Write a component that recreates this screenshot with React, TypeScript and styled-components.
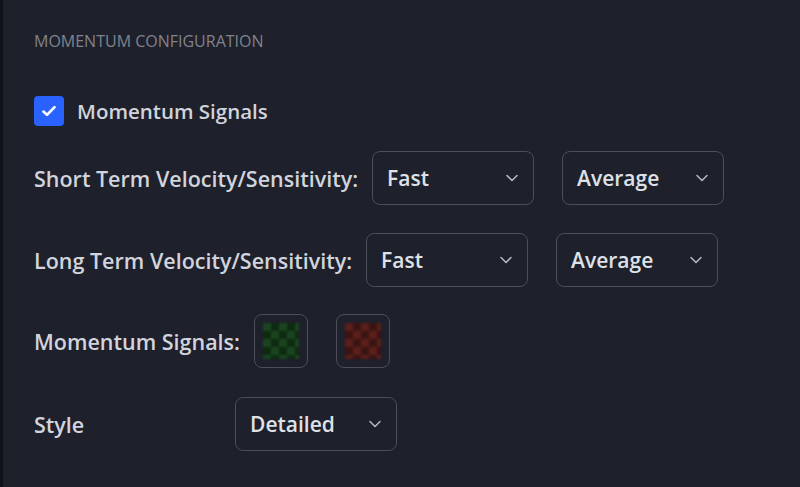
import * as React from 'react';
import styled, { createGlobalStyle } from 'styled-components';

const GlobalStyle = createGlobalStyle`
    html, body {
        margin: 0;
        padding: 0;
        background: #1e202b;
    }
    body {
        font-family: "Open Sans", "Noto Sans", sans-serif;
        color: #d1d4dc;
    }
`;

const Page = styled.div`
    display: flex;
    width: 800px;
    height: 487px;
    overflow: hidden;
`;

const Edge = styled.div`
    width: 3px;
    background: #10121a;
`;

const Panel = styled.div`
    flex: 1;
    padding: 30px 0 0 31px;
    display: flex;
    flex-direction: column;
`;

const Heading = styled.div`
    font-size: 16px;
    color: #80838d;
    text-transform: uppercase;
    height: 22px;
    line-height: 22px;
`;

const CheckRow = styled.label`
    display: flex;
    align-items: center;
    gap: 13px;
    margin-top: 44px;
    font-size: 20.5px;
    font-weight: 600;
`;

const Box = styled.span`
    width: 30px;
    height: 30px;
    border-radius: 4px;
    background: #2962ff;
    display: flex;
    align-items: center;
    justify-content: center;
`;

const Row = styled.div<{ $top: number }>`
    display: flex;
    align-items: center;
    margin-top: ${p => p.$top}px;
    height: 54px;
`;

const Label = styled.span<{ $width?: number }>`
    font-size: 21.5px;
    font-weight: 600;
    white-space: nowrap;
    margin-right: 14px;
    ${p => p.$width ? `width: ${p.$width}px;` : ''}
`;

const Controls = styled.div`
    display: flex;
    gap: 28px;
`;

const Select = styled.div`
    width: 162px;
    height: 54px;
    box-sizing: border-box;
    border: 1px solid #4c4f59;
    border-radius: 8px;
    display: flex;
    align-items: center;
    justify-content: space-between;
    padding: 0 14px 0 14px;
    font-size: 21px;
    font-weight: 600;
    color: #dfe1e8;
`;

const Swatch = styled.div<{ $dark: string; $light: string }>`
    width: 54px;
    height: 54px;
    box-sizing: border-box;
    border: 1px solid #4c4f59;
    border-radius: 8px;
    display: flex;
    align-items: center;
    justify-content: center;
    &::after {
        content: '';
        width: 36px;
        height: 36px;
        background-color: ${p => p.$light};
        background-image:
            linear-gradient(45deg, ${p => p.$dark} 25%, transparent 25%, transparent 75%, ${p => p.$dark} 75%),
            linear-gradient(45deg, ${p => p.$dark} 25%, transparent 25%, transparent 75%, ${p => p.$dark} 75%);
        background-size: 16px 16px;
        background-position: 0 0, 8px 8px;
        filter: blur(1px);
    }
`;

const Chevron = () => (
    <svg width="14" height="14" viewBox="0 0 14 14" fill="none">
        <path d="M2 4.5l5 5 5-5" stroke="#b2b5be" strokeWidth="1.6" strokeLinecap="round" strokeLinejoin="round" />
    </svg>
);

const Dropdown = ({ value }: { value: string }) => (
    <Select>
        <span>{value}</span>
        <Chevron />
    </Select>
);

export default function App() {
    return (
        <Page>
            <GlobalStyle />
            <Edge />
            <Panel>
                <Heading>Momentum Configuration</Heading>
                <CheckRow>
                    <Box>
                        <svg width="20" height="20" viewBox="0 0 18 18" fill="none">
                            <path d="M4 9.5l3.2 3L14 5.5" stroke="#fff" strokeWidth="2.4" strokeLinecap="round" strokeLinejoin="round" />
                        </svg>
                    </Box>
                    Momentum Signals
                </CheckRow>
                <Row $top={25}>
                    <Label>Short Term Velocity/Sensitivity:</Label>
                    <Controls>
                        <Dropdown value="Fast" />
                        <Dropdown value="Average" />
                    </Controls>
                </Row>
                <Row $top={28}>
                    <Label>Long Term Velocity/Sensitivity:</Label>
                    <Controls>
                        <Dropdown value="Fast" />
                        <Dropdown value="Average" />
                    </Controls>
                </Row>
                <Row $top={27}>
                    <Label>Momentum Signals:</Label>
                    <Controls>
                        <Swatch $dark="#0e2b12" $light="#1a4520" />
                        <Swatch $dark="#3a1413" $light="#5a1f1b" />
                    </Controls>
                </Row>
                <Row $top={29}>
                    <Label $width={187}>Style</Label>
                    <Dropdown value="Detailed" />
                </Row>
            </Panel>
        </Page>
    );
}
